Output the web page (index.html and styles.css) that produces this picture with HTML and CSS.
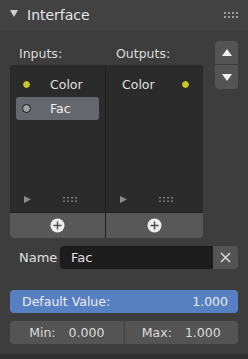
FILE: index.html
```html
<!DOCTYPE html>
<html>
<head>
    <meta charset="UTF-8">
    <title>Interface</title>
    <link rel="stylesheet" href="styles.css">
</head>
<body>
    <div class="panel">
        <div class="panel-header">
            <svg class="disclosure" width="8" height="7" viewBox="0 0 8 7"><polygon points="0,0 8,0 4,7" fill="#d0d0d0"/></svg>
            <span class="panel-title">Interface</span>
            <svg class="grip" width="14" height="6" viewBox="0 0 14 6">
                <g fill="#9a9a9a">
                    <rect x="0" y="0" width="2" height="2"/><rect x="4" y="0" width="2" height="2"/><rect x="8" y="0" width="2" height="2"/><rect x="12" y="0" width="2" height="2"/>
                    <rect x="0" y="4" width="2" height="2"/><rect x="4" y="4" width="2" height="2"/><rect x="8" y="4" width="2" height="2"/><rect x="12" y="4" width="2" height="2"/>
                </g>
            </svg>
        </div>

        <div class="panel-body">
            <div class="sockets">
                <div class="sockets-main">
                    <div class="socket-labels">
                        <span class="label-in">Inputs:</span>
                        <span class="label-out">Outputs:</span>
                    </div>
                    <div class="socket-lists">
                        <div class="socket-col col-in">
                            <div class="socket-items">
                                <div class="socket-item"><span class="dot dot-color"></span>Color</div>
                                <div class="socket-item active"><span class="dot dot-float"></span>Fac</div>
                                <div class="list-footer">
                                    <svg width="7" height="7" viewBox="0 0 7 7"><polygon points="0,0 7,3.5 0,7" fill="#8c8c8c"/></svg>
                                    <svg class="list-grip" width="14" height="5" viewBox="0 0 14 5">
                                        <g fill="#7a7a7a">
                                            <rect x="0" y="0" width="2" height="1.5"/><rect x="4" y="0" width="2" height="1.5"/><rect x="8" y="0" width="2" height="1.5"/><rect x="12" y="0" width="2" height="1.5"/>
                                            <rect x="0" y="3.5" width="2" height="1.5"/><rect x="4" y="3.5" width="2" height="1.5"/><rect x="8" y="3.5" width="2" height="1.5"/><rect x="12" y="3.5" width="2" height="1.5"/>
                                        </g>
                                    </svg>
                                </div>
                            </div>
                            <div class="add-row">
                                <svg width="15" height="15" viewBox="0 0 15 15"><circle cx="7.5" cy="7.5" r="7" fill="#eeeeee"/><path d="M7.5 3.5v8M3.5 7.5h8" stroke="#4a4a4a" stroke-width="1.4"/></svg>
                            </div>
                        </div>
                        <div class="socket-col col-out">
                            <div class="socket-items">
                                <div class="socket-item out">Color<span class="dot dot-color"></span></div>
                                <div class="list-footer">
                                    <svg width="7" height="7" viewBox="0 0 7 7"><polygon points="0,0 7,3.5 0,7" fill="#8c8c8c"/></svg>
                                    <svg class="list-grip" width="14" height="5" viewBox="0 0 14 5">
                                        <g fill="#7a7a7a">
                                            <rect x="0" y="0" width="2" height="1.5"/><rect x="4" y="0" width="2" height="1.5"/><rect x="8" y="0" width="2" height="1.5"/><rect x="12" y="0" width="2" height="1.5"/>
                                            <rect x="0" y="3.5" width="2" height="1.5"/><rect x="4" y="3.5" width="2" height="1.5"/><rect x="8" y="3.5" width="2" height="1.5"/><rect x="12" y="3.5" width="2" height="1.5"/>
                                        </g>
                                    </svg>
                                </div>
                            </div>
                            <div class="add-row">
                                <svg width="15" height="15" viewBox="0 0 15 15"><circle cx="7.5" cy="7.5" r="7" fill="#eeeeee"/><path d="M7.5 3.5v8M3.5 7.5h8" stroke="#4a4a4a" stroke-width="1.4"/></svg>
                            </div>
                        </div>
                    </div>
                </div>
                <div class="move-buttons">
                    <div class="move-btn up">
                        <svg width="10" height="7" viewBox="0 0 10 7"><polygon points="5,0 10,7 0,7" fill="#f0f0f0"/></svg>
                    </div>
                    <div class="move-btn down">
                        <svg width="10" height="7" viewBox="0 0 10 7"><polygon points="0,0 10,0 5,7" fill="#f0f0f0"/></svg>
                    </div>
                </div>
            </div>

            <div class="name-row">
                <span class="name-label">Name</span>
                <div class="name-field">Fac</div>
                <div class="name-clear">
                    <svg width="11" height="11" viewBox="0 0 11 11"><path d="M1 1L10 10M10 1L1 10" stroke="#d8d8d8" stroke-width="1.5"/></svg>
                </div>
            </div>

            <div class="value-bar">
                <span>Default Value:</span>
                <span>1.000</span>
            </div>

            <div class="minmax">
                <div class="minmax-cell"><span>Min:</span><span>0.000</span></div>
                <div class="minmax-cell"><span>Max:</span><span>1.000</span></div>
            </div>
        </div>
    </div>
</body>
</html>
```

FILE: styles.css
```css
* {
    box-sizing: border-box;
}

html {
    background: #303030;
}

body {
    margin: 0;
    font-family: "DejaVu Sans", "Liberation Sans", sans-serif;
    font-size: 12.5px;
    color: #e0e0e0;
}

.panel {
    width: 248px;
}

.panel-header {
    height: 30px;
    display: flex;
    align-items: center;
    padding: 0 10px 0 10px;
    background: #424242;
}

.disclosure {
    margin-right: 9px;
    margin-top: -3px;
}

.panel-title {
    font-size: 14px;
    color: #e6e6e6;
    flex: 1;
}

.grip {
    margin-top: -1px;
}

.panel-body {
    background: #3d3d3d;
    padding: 11px 10px 10px 10px;
}

.sockets {
    display: flex;
    gap: 12px;
}

.sockets-main {
    width: 193px;
}

.socket-labels {
    height: 24px;
    display: flex;
    align-items: center;
    color: #dcdcdc;
}

.label-in {
    width: 96px;
    padding-left: 9px;
}

.label-out {
    padding-left: 10px;
}

.socket-lists {
    display: flex;
    height: 173px;
    border-radius: 4px;
    overflow: hidden;
    background: #1f1f1f;
    gap: 1px;
}

.socket-col {
    display: flex;
    flex-direction: column;
}

.col-in {
    width: 95px;
}

.col-out {
    width: 97px;
}

.socket-items {
    flex: 1;
    background: #2b2b2b;
    display: flex;
    flex-direction: column;
    gap: 1px;
    padding: 8px 6px 0 6px;
}

.socket-item {
    height: 23px;
    display: flex;
    align-items: center;
    padding-left: 6px;
    border-radius: 3px;
}

.socket-item.active {
    background: #65676d;
    color: #f2f2f2;
}

.socket-item.out {
    padding-left: 10px;
    padding-right: 7px;
    justify-content: space-between;
}

.dot {
    width: 9px;
    height: 9px;
    border-radius: 50%;
    border: 1px solid #111;
    margin-right: 19px;
}

.socket-item.out .dot {
    margin-right: 0;
}

.dot-color {
    background: #c7c729;
}

.dot-float {
    background: #a1a1a1;
}

.list-footer {
    margin-top: auto;
    height: 20px;
    margin-bottom: 3px;
    display: flex;
    align-items: center;
    padding-left: 8px;
}

.list-grip {
    margin-left: 32px;
}

.add-row {
    height: 25px;
    margin-top: 1px;
    background: #585858;
    display: flex;
    align-items: center;
    justify-content: center;
}

.move-buttons {
    padding-top: 0;
    width: 23px;
    display: flex;
    flex-direction: column;
    gap: 1px;
}

.move-btn {
    height: 23px;
    background: #545454;
    display: flex;
    align-items: center;
    justify-content: center;
}

.move-btn.up {
    border-radius: 4px 4px 0 0;
}

.move-btn.down {
    height: 24px;
    border-radius: 0 0 4px 4px;
}

.name-row {
    margin-top: 8px;
    height: 23px;
    display: flex;
    align-items: center;
}

.name-label {
    width: 50px;
    padding-left: 9px;
    font-size: 13px;
}

.name-field {
    flex: 1;
    height: 23px;
    line-height: 21px;
    padding-left: 10px;
    background: #1d1d1d;
    border: 1px solid #191919;
    border-radius: 4px 0 0 4px;
    font-size: 13px;
    color: #e6e6e6;
}

.name-clear {
    width: 25px;
    height: 23px;
    background: #545454;
    border-radius: 0 4px 4px 0;
    display: flex;
    align-items: center;
    justify-content: center;
}

.value-bar {
    margin-top: 21px;
    height: 23px;
    background: #5680c2;
    border-radius: 4px;
    display: flex;
    align-items: center;
    justify-content: space-between;
    padding: 0 10px 0 12px;
    color: #ececec;
}

.minmax {
    margin-top: 8px;
    height: 23px;
    display: flex;
    gap: 1px;
    background: #3d3d3d;
}

.minmax-cell {
    flex: 1;
    background: #545454;
    display: flex;
    align-items: center;
    justify-content: center;
    gap: 13px;
    color: #dcdcdc;
}

.minmax-cell:first-child {
    border-radius: 4px 0 0 4px;
}

.minmax-cell:last-child {
    border-radius: 0 4px 4px 0;
}
```
